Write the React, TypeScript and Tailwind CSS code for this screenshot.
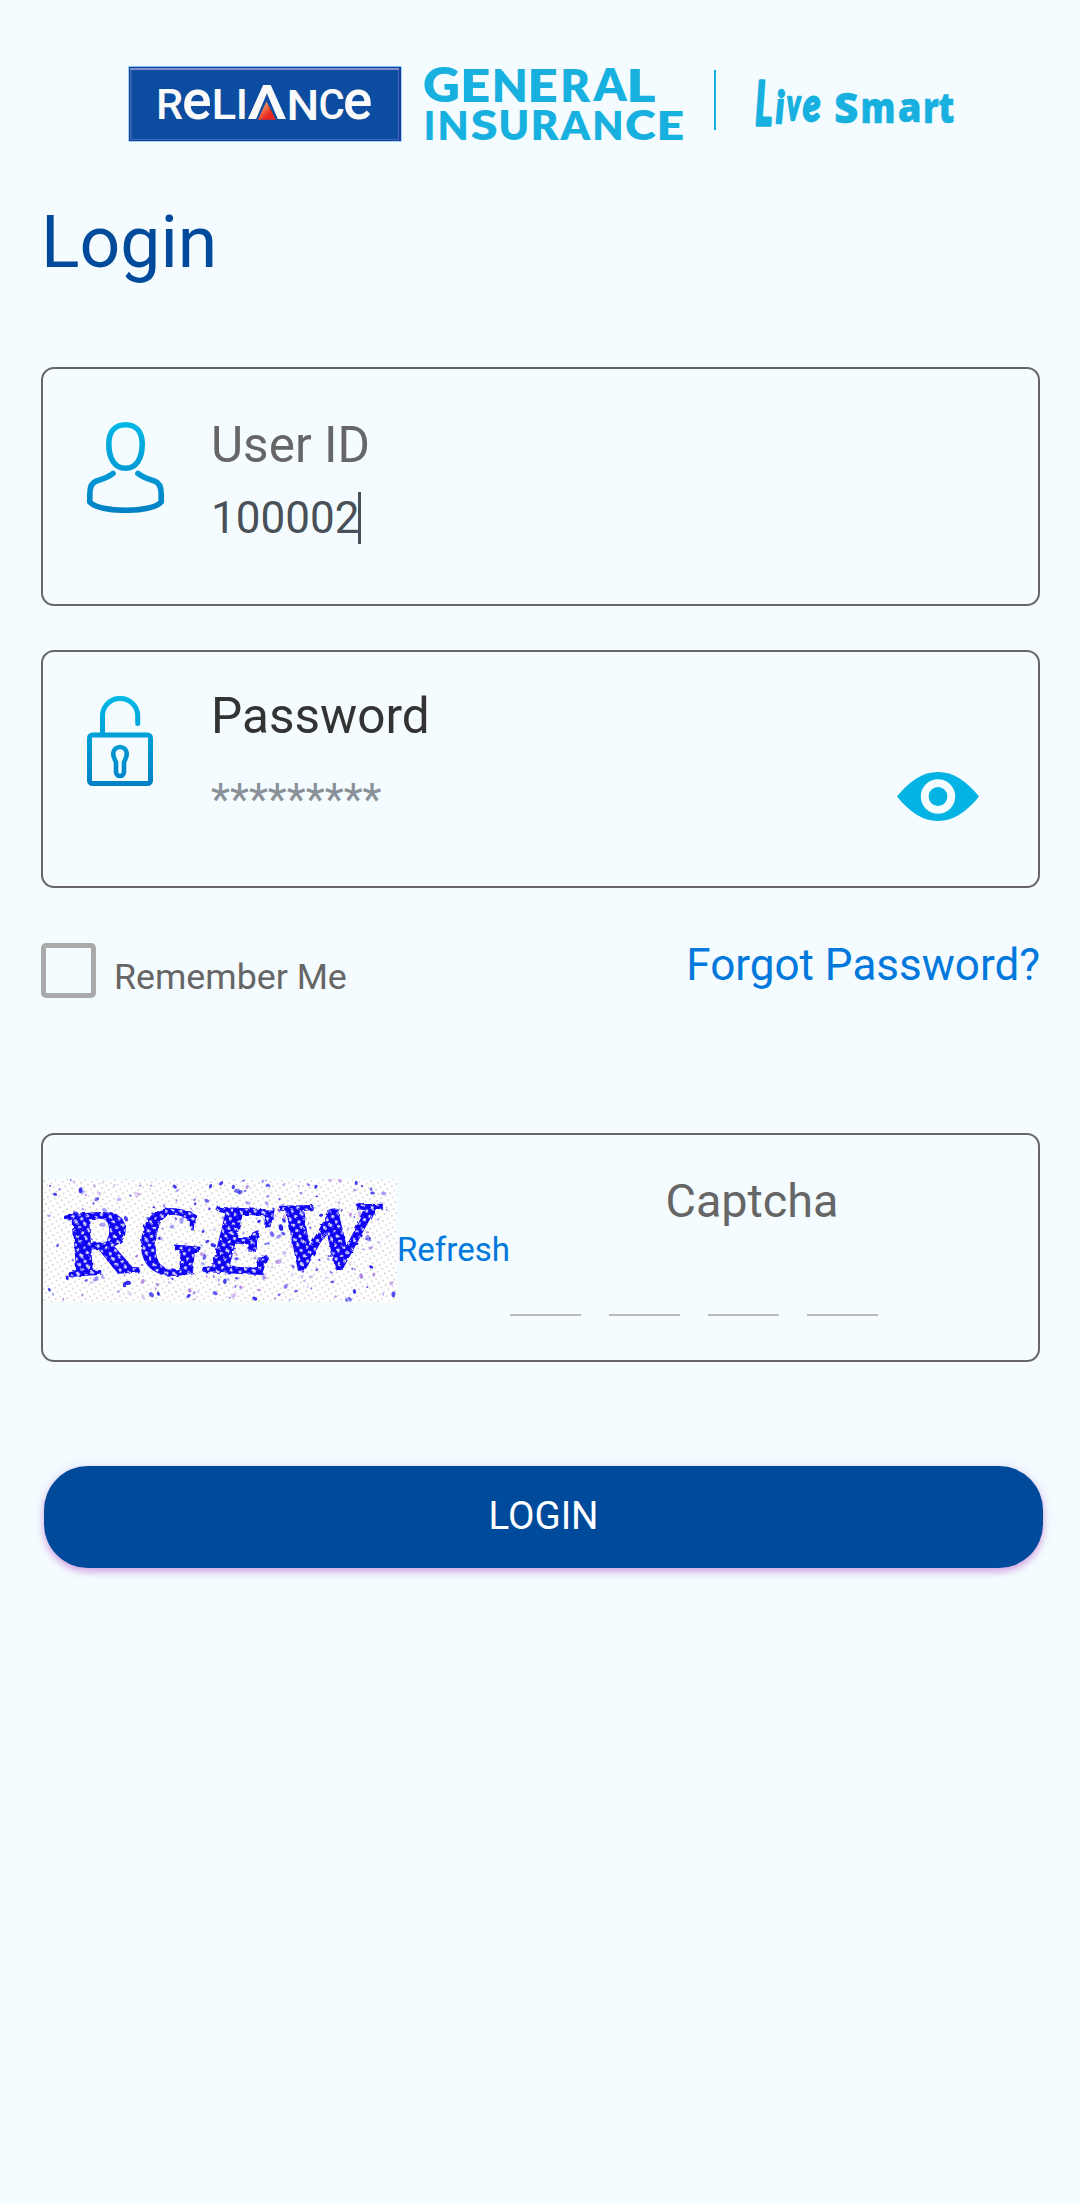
import { useMemo } from "react";

/** A letter and the box its ink fills: left, top, right, bottom. */
type Letter = [ch: string, x0: number, y0: number, x1: number, y1: number];

const ctx = document.createElement("canvas").getContext("2d")!;

/** Transform that makes the ink of a 100px glyph fill the given box. */
function fitInk([ch, x0, y0, x1, y1]: Letter, style: string) {
  ctx.font = style;
  const m = ctx.measureText(ch);
  const sx = (x1 - x0) / (m.actualBoundingBoxLeft + m.actualBoundingBoxRight);
  const sy = (y1 - y0) / (m.actualBoundingBoxAscent + m.actualBoundingBoxDescent);
  return `translate(${x0 + m.actualBoundingBoxLeft * sx} ${y0 + m.actualBoundingBoxAscent * sy}) scale(${sx} ${sy})`;
}

function FittedWord(props: {
  letters: Letter[];
  family: string;
  weight: number;
  italic?: boolean;
  fill: string;
  stroke?: number;
}) {
  const { letters, family, weight, italic = false, fill, stroke = 0 } = props;
  const transforms = useMemo(
    () => letters.map((l) => fitInk(l, `${italic ? "italic " : ""}${weight} 100px "${family}"`)),
    [letters, family, weight, italic],
  );
  return (
    <g
      fontFamily={`"${family}", sans-serif`}
      fontWeight={weight}
      fontStyle={italic ? "italic" : "normal"}
      fontSize="100"
      fill={fill}
      stroke={stroke ? fill : "none"}
      strokeWidth={stroke}
      strokeLinejoin="round"
    >
      {letters.map((l, i) => (
        <text key={i} transform={transforms[i]}>
          {l[0]}
        </text>
      ))}
    </g>
  );
}

const RELIANCE: Letter[] = [
  ["R", 31, 23.4, 54.3, 53.4],
  ["e", 55.7, 23, 82.3, 53.8],
  ["L", 86.7, 23.4, 107.3, 53.4],
  ["I", 111.3, 23.4, 116.9, 53.4],
  ["Λ", 119.5, 19.3, 158.3, 53.4],
  ["N", 161.7, 23.2, 188, 53.6],
  ["C", 192, 23, 215.3, 53.6],
  ["e", 216.7, 23, 243, 53.8],
];
const GENERAL: Letter[] = [
  ["G", 296, 1.2, 330.3, 36.7],
  ["E", 336, 2.2, 360.7, 35.7],
  ["N", 367, 2.2, 396.7, 35.7],
  ["E", 403.3, 2.2, 428.3, 35.7],
  ["R", 435.3, 2.2, 462.5, 35.7],
  ["A", 464.5, 2.2, 499.5, 35.7],
  ["L", 502.5, 2.2, 527, 35.7],
];
const INSURANCE: Letter[] = [
  ["I", 298.5, 44, 304.9, 74],
  ["N", 312.3, 44, 338, 74],
  ["S", 343.3, 43, 368.5, 74.8],
  ["U", 373, 44, 398.8, 74.8],
  ["R", 405.7, 44, 431, 74],
  ["A", 431.7, 44, 463, 74],
  ["N", 467, 44, 492.8, 74],
  ["C", 498.3, 43, 527.7, 74.8],
  ["E", 532, 44, 554.7, 74],
];
const LIVE: Letter[] = [
  ["L", 628.4, 14, 643, 58.5],
  ["i", 648.5, 24, 656, 56.6],
  ["v", 659.5, 31.5, 673, 53.8],
  ["e", 675.8, 31.5, 691.5, 55.8],
];
const SMART: Letter[] = [
  ["S", 707.7, 26.7, 729.3, 57.3],
  ["m", 734.5, 33.3, 765.3, 56.7],
  ["a", 771, 33.3, 791.3, 57.3],
  ["r", 797, 33.3, 810.5, 56.7],
  ["t", 811, 28.3, 825.3, 57.3],
];

function Logo() {
  return (
    <svg className="block h-[76px] w-[826px] overflow-visible" viewBox="0 0 826 76" role="img" aria-label="Reliance General Insurance, Live Smart">
      <defs>
        <linearGradient id="flame" x1="0" y1="0" x2="1" y2="1">
          <stop offset="0.3" stopColor="#f58a5a" />
          <stop offset="0.65" stopColor="#e8281f" />
        </linearGradient>
      </defs>
      <rect x="0.3" y="0" width="273.4" height="75.7" fill="#6fcdf0" />
      <rect x="1" y="1" width="272" height="74" fill="#2138a0" />
      <rect x="2" y="2" width="269" height="72" fill="#3f68b4" />
      <rect x="3.5" y="3" width="266.5" height="70" fill="#0d4da1" />
      <rect x="2" y="2" width="269" height="2" fill="#7f93cb" />
      <FittedWord letters={RELIANCE} family="Roboto" weight={500} fill="#fafafa" />
      <path d="M138.5 35.5L148 53.7H129.8Z" fill="url(#flame)" />
      <FittedWord letters={GENERAL} family="Lato" weight={800} fill="#18b1df" />
      <FittedWord letters={INSURANCE} family="Lato" weight={800} fill="#18b1df" />
      <rect x="586" y="4" width="2" height="60" fill="#18b1df" />
      <FittedWord letters={LIVE} family="Lato" weight={700} italic fill="#18b1df" stroke={6} />
      <FittedWord letters={SMART} family="Open Sans" weight={800} fill="#18b1df" stroke={1} />
    </svg>
  );
}

function UserIcon() {
  return (
    <svg className="block h-[91px] w-[77px] shrink-0" viewBox="0 0 77 91" fill="none" stroke="url(#userBlue)" strokeWidth="5.6" strokeLinecap="round" strokeLinejoin="round">
      <defs>
        <linearGradient id="userBlue" gradientUnits="userSpaceOnUse" x1="0" y1="0" x2="0" y2="91">
          <stop offset="0" stopColor="#00b8e6" />
          <stop offset="1" stopColor="#0080c6" />
        </linearGradient>
      </defs>
      <path d="M38.5 2.8C28 2.8 21.8 10 21.8 22C21.8 37 28 46.3 38.5 46.3C49 46.3 55.2 37 55.2 22C55.2 10 49 2.800 38.5 2.800Z" />
      <path d="M26 51.500C22 54.500 15 57.500 9.500 59C5 60.500 2.800 66 2.800 72V80C12 91 65 91 74.200 80V72C74.200 66 72 60.500 67.500 59C62 57.500 55 54.500 51 51.500" />
    </svg>
  );
}

function LockIcon() {
  return (
    <svg className="block h-[90px] w-[66px] shrink-0" viewBox="0 0 66 90" fill="none" stroke="url(#lockBlue)" strokeWidth="5" strokeLinecap="round" strokeLinejoin="round">
      <defs>
        <linearGradient id="lockBlue" gradientUnits="userSpaceOnUse" x1="0" y1="0" x2="0" y2="90">
          <stop offset="0" stopColor="#00b8e6" />
          <stop offset="1" stopColor="#0080c6" />
        </linearGradient>
      </defs>
      <path d="M15.500 38V20A17.600 17.600 0 0 1 50.700 20V27.500" />
      <rect x="2.500" y="39" width="61" height="48.500" rx="3" />
      <path d="M29 76V66.500C28.500 64.500 26.200 62 26.200 57.800A6.800 6.800 0 0 1 39.800 57.800C39.800 62 37.500 64.500 37 66.500V76A4 4 0 0 1 29 76Z" strokeWidth="4.600" />
    </svg>
  );
}

function EyeIcon() {
  return (
    <svg className="block h-[49px] w-[82px]" viewBox="0 0 82 49">
      <path d="M0 24.500C13 8.500 26 0 41 0C56 0 69 8.500 82 24.500C69 40.500 56 49 41 49C26 49 13 40.500 0 24.500Z" fill="#03b3e3" />
      <circle cx="41" cy="24.500" r="13.300" fill="none" stroke="#f4fcff" strokeWidth="7.800" />
    </svg>
  );
}

type Speck = { x: number; y: number; r: number; angle: number; o: number; hue: string };

function makeSpecks(): Speck[] {
  let seed = 20177;
  const rnd = () => {
    seed = (seed * 48271) % 2147483647;
    return seed / 2147483647;
  };
  return Array.from({ length: 290 }, () => ({
    x: rnd() * 350 + 2,
    y: rnd() * 120 + 1,
    r: 0.8 + rnd() * rnd() * 1.7,
    angle: rnd() * 180,
    o: 0.25 + rnd() * 0.7,
    hue: rnd() > 0.3 ? "#1c14f0" : "#a878e0",
  }));
}

const CAPTCHA: { letter: Letter; italic: boolean; rotate: number }[] = [
  { letter: ["R", 23, 34, 95, 96], italic: false, rotate: -4 },
  { letter: ["G", 98, 30, 158, 97], italic: false, rotate: 5 },
  { letter: ["E", 161, 30, 230, 95], italic: true, rotate: 3 },
  { letter: ["W", 236, 27, 340, 91], italic: true, rotate: -1 },
];

function CaptchaLetters({ fill, stroke = 0 }: { fill?: string; stroke?: number }) {
  return CAPTCHA.map(({ letter, italic, rotate }) => (
    <text
      key={letter[0]}
      transform={`rotate(${rotate} ${(letter[1] + letter[3]) / 2} ${(letter[2] + letter[4]) / 2}) ${fitInk(letter, `${italic ? "italic " : ""}700 100px "Liberation Serif"`)}`}
      fontSize="100"
      fontFamily='"Liberation Serif", serif'
      fontWeight="700"
      fontStyle={italic ? "italic" : "normal"}
      fill={fill}
      stroke={fill}
      strokeWidth={stroke}
    >
      {letter[0]}
    </text>
  ));
}

function CaptchaImage() {
  const specks = useMemo(makeSpecks, []);
  return (
    <svg className="block h-[123px] w-[354px] shrink-0 bg-white" viewBox="0 0 354 123">
      <defs>
        <pattern id="dots" width="7.2" height="7.2" patternUnits="userSpaceOnUse" patternTransform="rotate(14)">
          <circle cx="1.8" cy="1.8" r="0.9" fill="#c8cccb" />
          <circle cx="5.4" cy="5.4" r="0.9" fill="#d3ccd5" />
        </pattern>
        <pattern id="holes" width="9" height="9" patternUnits="userSpaceOnUse" patternTransform="rotate(14)">
          <rect x="0.8" y="0.8" width="2.9" height="2.9" rx="0.5" fill="#dedcf4" />
          <rect x="5.3" y="5.3" width="2.9" height="2.9" rx="0.5" fill="#dedcf4" />
        </pattern>
        <filter id="rough" x="-5%" y="-5%" width="110%" height="110%">
          <feTurbulence type="fractalNoise" baseFrequency="0.18" numOctaves="2" seed="4" result="n" />
          <feDisplacementMap in="SourceGraphic" in2="n" scale="4" />
        </filter>
        <clipPath id="captchaLetters">{CaptchaLetters({})}</clipPath>
      </defs>
      <rect width="354" height="123" fill="url(#dots)" />
      {specks.map((s, i) => (
        <ellipse key={i} cx={s.x} cy={s.y} rx={s.r * 1.5} ry={s.r} fill={s.hue} opacity={s.o} transform={`rotate(${s.angle} ${s.x} ${s.y})`} />
      ))}
      <g filter="url(#rough)">
        <CaptchaLetters fill="#0d05f5" stroke={1.5} />
        <rect width="354" height="123" fill="url(#holes)" clipPath="url(#captchaLetters)" />
      </g>
    </svg>
  );
}

export default function App() {
  return (
    <main className="flex h-[2204px] w-[1080px] flex-col bg-[#f4fcff] pt-[66px] font-['Roboto',sans-serif]">
      <header className="pl-[128px]">
        <Logo />
      </header>

      <h1 className="mt-[57px] pl-[41px] text-[71.5px] leading-[88px] text-[#004a9b]">Login</h1>

      <section className="mt-[80px] ml-[41px] flex h-[239px] w-[999px] rounded-[13px] border-2 border-[#666] pt-[46px] pl-[44px]">
        <div className="w-[124px] pt-[7px]">
          <UserIcon />
        </div>
        <div>
          <label className="block text-[49.5px] leading-[60px] text-[#666]">User ID</label>
          <div className="mt-[17px] flex text-[44px] leading-[52px] text-[#495057]">
            100002
            <span className="-ml-[1px] h-[52px] w-[3px] bg-[#495057]" />
          </div>
        </div>
      </section>

      <section className="mt-[44px] ml-[41px] flex h-[238px] w-[999px] rounded-[13px] border-2 border-[#666] pl-[44px]">
        <div className="w-[124px] pt-[44px]">
          <LockIcon />
        </div>
        <div className="flex-1 pt-[34px]">
          <label className="block text-[49.5px] leading-[60px] text-[#333]">Password</label>
          <div className="mt-[28px] text-[44px] leading-[52px] text-[#8a9198]">*********</div>
        </div>
        <button className="mt-[120px] mr-[59px] h-[49px]" aria-label="Show password">
          <EyeIcon />
        </button>
      </section>

      <div className="mt-[55px] flex h-[56px] items-start justify-between pr-[40px] pl-[41px]">
        <label className="flex">
          <span className="size-[55px] rounded-[5px] border-[5px] border-[#aaa]" />
          <span className="mt-[14px] ml-[18px] text-[35.75px] leading-[40px] text-[#666]">Remember Me</span>
        </label>
        <a className="-mt-[4px] text-[44px] leading-[52px] text-[#0078dc]">Forgot Password?</a>
      </div>

      <section className="mt-[134px] ml-[41px] flex h-[229px] w-[999px] rounded-[13px] border-2 border-[#666] pt-[44px]">
        <CaptchaImage />
        <a className="mt-[51px] w-[113px] text-[33px] leading-[40px] text-[#0078dc]">Refresh</a>
        <div className="-mt-[8px] w-[484px]">
          <div className="text-center text-[46.75px] leading-[60px] text-[#666]">Captcha</div>
          <div className="mt-[83px] flex gap-[28px]">
            {[0, 1, 2, 3].map((i) => (
              <span key={i} className="h-[2px] w-[71px] bg-[#bbb]" />
            ))}
          </div>
        </div>
      </section>

      <button className="mt-[104px] ml-[44px] h-[102px] w-[999px] rounded-[44px] bg-[#004a9b] pb-[2px] text-[38.5px] text-white shadow-[0_4px_7px_rgba(180,60,190,0.4),0_0_12px_rgba(160,120,220,0.18)]">
        LOGIN
      </button>
    </main>
  );
}
